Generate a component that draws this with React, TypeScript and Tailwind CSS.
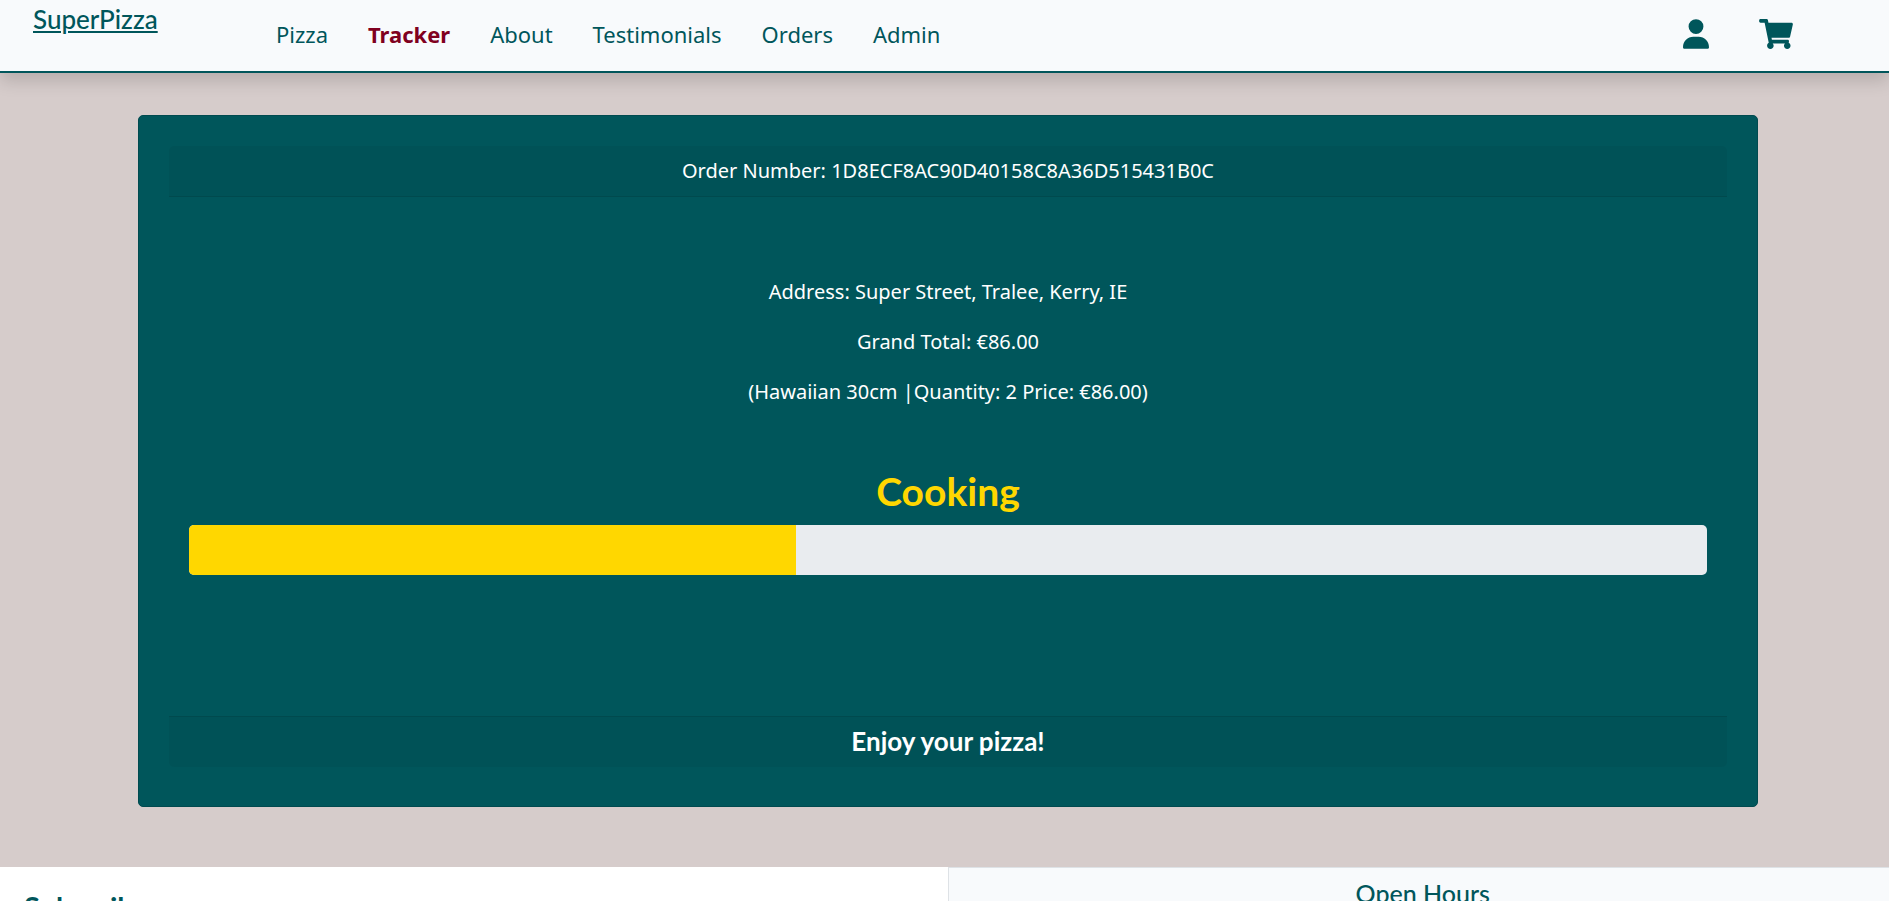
import { FaShoppingCart } from "react-icons/fa";
import { FaUser } from "react-icons/fa6";

const links = ["Pizza", "Tracker", "About", "Testimonials", "Orders", "Admin"];

const order = {
  number: "1D8ECF8AC90D40158C8A36D515431B0C",
  address: "Super Street, Tralee, Kerry, IE",
  total: "€86.00",
  items: "(Hawaiian 30cm |Quantity: 2 Price: €86.00)",
  status: "Cooking",
  progress: 40,
};

function NavBar() {
  return (
    <header className="relative z-10 flex h-[73px] shrink-0 items-start border-b-2 border-[#00565b] bg-[#f8fafc] pr-24 pl-8 text-[#00565b] shadow-[0_8px_16px_rgba(0,0,0,0.15)]">
      <a
        href="#home"
        className="mt-[3px] w-[244px] pl-px font-['Lato',sans-serif] text-[26px] leading-8 font-medium underline decoration-2 underline-offset-2"
      >
        SuperPizza
      </a>
      <nav className="mt-[19px] flex gap-10 font-['Noto_Sans',sans-serif] text-[22px] leading-[30px]">
        {links.map((label) => (
          <a
            key={label}
            href={"#" + label.toLowerCase()}
            className={label === "Tracker" ? "font-bold text-[#800020]" : ""}
          >
            {label}
          </a>
        ))}
      </nav>
      <div className="mt-[19px] ml-auto flex gap-[50px]">
        <button type="button" aria-label="Account">
          <FaUser className="h-[30px] w-[26px]" />
        </button>
        <button type="button" aria-label="Cart">
          <FaShoppingCart className="h-[30px] w-[34px]" />
        </button>
      </div>
    </header>
  );
}

function OrderCard() {
  return (
    <section className="rounded-[5px] border border-[#004a4f] bg-[#00565b] px-[30px] pt-[30px] pb-[39px] text-center font-['Noto_Sans',sans-serif] text-[20px] leading-[30px] text-white">
      <h1 className="rounded-t-[5px] border-b border-black/10 bg-black/[0.04] py-[10px]">
        Order Number: {order.number}
      </h1>
      <div className="px-5 pt-20 pb-[141px]">
        <div className="flex flex-col gap-5">
          <p>Address: {order.address}</p>
          <p>Grand Total: {order.total}</p>
          <p>{order.items}</p>
        </div>
        <h2
          id="status"
          className="mt-[58px] mb-2 font-['Lato',sans-serif] text-[39px] leading-[52px] font-bold text-[#ffd700]"
        >
          {order.status}
        </h2>
        <div
          role="progressbar"
          aria-labelledby="status"
          aria-valuenow={order.progress}
          className="h-[50px] overflow-hidden rounded-[5px] bg-[#e9ecef]"
        >
          <div className="h-full bg-[#ffd700]" style={{ width: order.progress + "%" }} />
        </div>
      </div>
      <p className="rounded-b-[5px] border-t border-black/10 bg-black/[0.04] pt-[9px] pb-[11px] font-['Lato',sans-serif] text-[26px] font-bold">
        Enjoy your pizza!
      </p>
    </section>
  );
}

export default function App() {
  return (
    <div className="flex h-screen flex-col overflow-hidden bg-[#d6cccb]">
      <NavBar />
      <main className="shrink-0 pt-[42px] pr-[131px] pb-[60px] pl-[138px]">
        <OrderCard />
      </main>
      <footer className="flex min-h-0 flex-1 overflow-hidden bg-white font-['Lato',sans-serif] text-[#00565b]">
        <section className="w-1/2 shrink-0 pt-[22px] pl-6">
          <h2 className="text-[29px] leading-9 font-bold">Subscribe</h2>
        </section>
        <section className="ml-[3px] flex-1 border-t border-l border-[#dee2e6] bg-[#f8fafc] pt-2 pl-2 text-center">
          <h2 className="text-[25px] leading-[34px] font-medium">Open Hours</h2>
        </section>
      </footer>
    </div>
  );
}
